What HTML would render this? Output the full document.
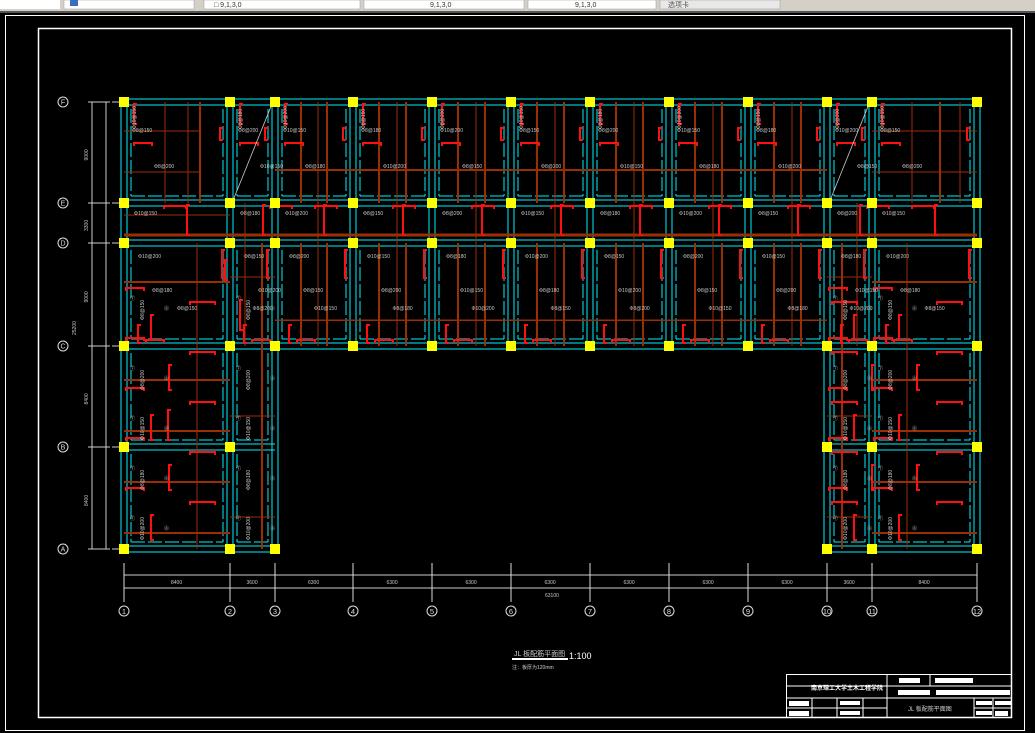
<!DOCTYPE html>
<html><head><meta charset="utf-8">
<style>
html,body{margin:0;padding:0;background:#000;width:1035px;height:733px;overflow:hidden}
svg{display:block}
text{font-family:"Liberation Sans","Noto Sans CJK SC",sans-serif}
</style></head>
<body>
<svg id="s" width="1035" height="733" viewBox="0 0 1035 733" xmlns="http://www.w3.org/2000/svg">
<rect x="0" y="0" width="1035" height="733" fill="#000"/>
<rect x="0" y="0" width="1035" height="11" fill="#d4d0c8"/>
<rect x="0" y="0" width="60" height="9" fill="#fff"/>
<rect x="64" y="0" width="130" height="9" fill="#fff" stroke="#999" stroke-width="0.5"/>
<rect x="70" y="0" width="8" height="6" fill="#3a6fc0"/>
<rect x="204" y="0" width="156" height="9" fill="#fff" stroke="#999" stroke-width="0.5"/>
<rect x="364" y="0" width="160" height="9" fill="#fff" stroke="#999" stroke-width="0.5"/>
<rect x="528" y="0" width="128" height="9" fill="#fff" stroke="#999" stroke-width="0.5"/>
<rect x="660" y="0" width="120" height="9" fill="#e8e8e8" stroke="#999" stroke-width="0.5"/>
<text x="214" y="7" font-size="7" fill="#333">□ 9,1,3,0</text>
<text x="430" y="7" font-size="7" fill="#333">9,1,3,0</text>
<text x="575" y="7" font-size="7" fill="#333">9,1,3,0</text>
<text x="668" y="7" font-size="7" fill="#555">选项卡</text>
<rect x="0" y="11" width="1035" height="2" fill="#555"/>
<rect x="5.5" y="15.5" width="1019" height="715" fill="none" stroke="#fff" stroke-width="1"/>
<rect x="38.5" y="28.5" width="973" height="689" fill="none" stroke="#fff" stroke-width="1.5"/>
<g id="g" shape-rendering="crispEdges"></g>
<g stroke="#fff" stroke-width="1" fill="none" shape-rendering="crispEdges">
<rect x="786.5" y="674.5" width="225" height="43"/>
<line x1="887" y1="674" x2="887" y2="718"/>
<line x1="930" y1="674" x2="930" y2="686"/>
<line x1="786" y1="686" x2="1012" y2="686"/>
<line x1="887" y1="698" x2="1012" y2="698"/>
<line x1="786" y1="698" x2="887" y2="698"/>
<line x1="786" y1="708" x2="887" y2="708"/>
<line x1="812" y1="698" x2="812" y2="718"/>
<line x1="837" y1="698" x2="837" y2="718"/>
<line x1="863" y1="698" x2="863" y2="718"/>
<line x1="974" y1="698" x2="974" y2="718"/>
<line x1="993" y1="698" x2="993" y2="718"/>
<line x1="974" y1="708" x2="1012" y2="708"/>
</g>
<g fill="#fff">
<rect x="899" y="678" width="21" height="5"/><rect x="935" y="678" width="38" height="5"/>
<rect x="898" y="690" width="32" height="5"/><rect x="936" y="690" width="74" height="5"/>
<rect x="789" y="701" width="20" height="5"/><rect x="840" y="701" width="20" height="4"/>
<rect x="789" y="711" width="20" height="5"/><rect x="840" y="711" width="20" height="4"/>
<rect x="976" y="701" width="16" height="4"/><rect x="995" y="701" width="16" height="4"/>
<rect x="976" y="711" width="16" height="4"/><rect x="995" y="711" width="13" height="5"/>
<rect x="512" y="658" width="56" height="2"/>
</g>
<text x="811" y="690" font-size="6" fill="#fff" font-weight="bold">南京理工大学土木工程学院</text>
<text x="908" y="711" font-size="6" fill="#ccc">JL 板配筋平面图</text>
<text x="514" y="656" font-size="7" fill="#ccc">JL 板配筋平面图</text>
<text x="569" y="659" font-size="9" fill="#fff">1:100</text>
<text x="512" y="669" font-size="5" fill="#ccc">注：板厚为120mm</text>
</svg>
<script>
(function(){
var g=document.getElementById('g');var h='';
var X=[124,230,275,353,432,511,590,669,748,827,872,977];
var Y=[102,203,243,346,447,549];var R=['F','E','D','C','B','A'];
function L(x1,y1,x2,y2,c,w,d){h+='<line x1="'+x1+'" y1="'+y1+'" x2="'+x2+'" y2="'+y2+'" stroke="'+c+'" stroke-width="'+(w||1)+'"'+(d?' stroke-dasharray="'+d+'"':'')+'/>';}
function T(x,y,s,r){h+='<text x="'+x+'" y="'+y+'" font-size="5" fill="#c8c8c8"'+(r?' transform="rotate(-90 '+x+' '+y+')"':'')+'>'+s+'</text>';}
var C='#00f0ff',B='#9a2e06',RD='#ff1010';
function wallH(y,x1,x2){L(x1,y-3,x2,y-3,C,1);L(x1,y+3,x2,y+3,C,1);}
function wallV(x,y1,y2){L(x-3,y1,x-3,y2,C,1);L(x+3,y1,x+3,y2,C,1);}
[0,1,2,3].forEach(function(i){wallH(Y[i],124,977);});
[4,5].forEach(function(i){wallH(Y[i],124,275);wallH(Y[i],827,977);});
[0,1,2,9,10,11].forEach(function(i){wallV(X[i],102,549);});
for(var i=3;i<9;i++)wallV(X[i],102,346);
function bayDash(x1,x2,y1,y2){L(x1+7,y2-7,x2-7,y2-7,C,1,'14,3');L(x1+7,y1+7,x1+7,y2-7,C,1,'14,3');L(x2-7,y1+7,x2-7,y2-7,C,1,'14,3');}
for(var i=0;i<11;i++){bayDash(X[i],X[i+1],Y[0],Y[1]);bayDash(X[i],X[i+1],Y[2],Y[3]);}
[0,1,9,10].forEach(function(i){for(var r=3;r<5;r++)bayDash(X[i],X[i+1],Y[r],Y[r+1]);});
for(var i=2;i<9;i++){var m1=Math.round(X[i]+(X[i+1]-X[i])/3),m2=Math.round(X[i]+2*(X[i+1]-X[i])/3);
 L(m1,102,m1,203,B,2);L(m2,102,m2,203,B,2);L(m1,243,m1,346,B,2);L(m2,243,m2,346,B,2);
 var mm=Math.round((X[i]+X[i+1])/2+4);L(mm,102,mm,346,B,1);}
L(275,170,827,170,B,2);L(124,235,977,235,B,3);L(275,320,827,320,B,1.5);
L(165,102,165,203,B,1);L(200,102,200,203,B,2);L(188,102,188,203,B,1);
L(124,172,200,172,B,1);L(124,215,230,215,B,1);L(124,131,200,131,B,1);
L(912,102,912,203,B,1);L(940,102,940,203,B,2);L(960,102,960,203,B,1);
L(872,172,977,172,B,1);L(872,131,977,131,B,1);
[282,380,431,482,533].forEach(function(y){L(124,y,230,y,B,2);L(872,y,977,y,B,2);});
L(197,243,197,549,B,1);L(907,243,907,549,B,1);
L(262,243,262,549,B,2);L(842,243,842,549,B,2);
[277,416,517].forEach(function(y){L(230,y,275,y,B,1.2);L(827,y,872,y,B,1.2);});
L(245,203,245,346,B,1);L(857,203,857,346,B,1);
function brV(x,y,l){x=Math.round(x);h+='<path d="M'+(x+3)+' '+y+'H'+x+'V'+(y+l)+'H'+(x+3)+'" fill="none" stroke="'+RD+'" stroke-width="2"/>';}
function brH(x,y,l){x=Math.round(x);h+='<path d="M'+x+' '+(y+3)+'V'+y+'H'+(x+l)+'V'+(y+3)+'" fill="none" stroke="'+RD+'" stroke-width="2"/>';}
for(var i=0;i<11;i++){var xm=X[i]+10;brV(xm,104,20);brV((X[i]+X[i+1])/2+10,205,30);brV(X[i+1]-8,250,28);brV(X[i]+14,325,18);brH(X[i]+10,143,18);brH(X[i]+40,206,22);brH(X[i]+22,340,18);brV(X[i+1]-10,128,12);}
[0,9,10].forEach(function(i){[300,350,400,450,500].forEach(function(y,k){brV(X[i]+(k%2?45:27),y+15,25);brH(X[i]+2,y-12,18);brH(X[i+1]-40,y+2,25);});});
brV(168,410,30);brV(240,300,30);brV(225,260,20);
var labs=['Φ8@150','Φ8@200','Φ10@150','Φ8@180','Φ10@200'];
for(var i=0;i<11;i++){T(X[i]+8,132,labs[i%5]);T(X[i]+30,168,labs[(i+1)%5]);T(X[i]+10,215,labs[(i+2)%5]);T(X[i]+28,292,labs[(i+3)%5]);T(X[i]+14,258,labs[(i+4)%5]);T((X[i]+X[i+1])/2,310,labs[i%5]);T(X[i]+12,129,labs[(i+2)%5],1);}
[0,1,9,10].forEach(function(i){[300,370,420,470,520].forEach(function(y,k){T(X[i]+6,y,'⑦');T(X[i]+40,y+10,'⑧');T(X[i]+20,y+20,labs[k],1);});});
L(92,102,92,549,'#ccc',1);L(106,102,106,549,'#ccc',1);
Y.forEach(function(y,k){L(88,y,110,y,'#ccc',1);L(112,y,120,y,'#ccc',1);
 h+='<circle cx="63" cy="'+y+'" r="5" fill="none" stroke="#ddd" stroke-width="1" shape-rendering="auto"/><text x="63" y="'+(y+2.5)+'" font-size="7" fill="#ddd" text-anchor="middle">'+R[k]+'</text>';});
var vd=['9000','3300','9000','8400','8400'];
for(var k=0;k<5;k++)T(88,(Y[k]+Y[k+1])/2+8,vd[k],1);
T(76,335,'25200',1);
L(124,575,977,575,'#ccc',1);L(124,588,977,588,'#ccc',1);
var hd=['8400','3600','6300','6300','6300','6300','6300','6300','6300','3600','8400'];
X.forEach(function(x,k){L(x,563,x,602,'#ddd',1);
 h+='<circle cx="'+x+'" cy="611" r="5" fill="none" stroke="#ddd" stroke-width="1" shape-rendering="auto"/><text x="'+x+'" y="614" font-size="7.5" fill="#ddd" text-anchor="middle">'+(k+1)+'</text>';
 if(k<11)T((x+X[k+1])/2-6,584,hd[k]);});
T(545,597,'63100');
h+='<g shape-rendering="auto">';L(234,198,272,104,'#ccc',0.8);L(831,198,869,104,'#ccc',0.8);h+='</g>';
var cols=[[0,1,2,3,4,5,6,7,8,9,10,11],[0,1,2,3,4,5,6,7,8,9,10,11],[0,1,2,3,4,5,6,7,8,9,10,11],[0,1,2,3,4,5,6,7,8,9,10,11],[0,1,9,10,11],[0,1,2,9,10,11]];
cols.forEach(function(a,r){a.forEach(function(i){h+='<rect x="'+(X[i]-5)+'" y="'+(Y[r]-5)+'" width="10" height="10" fill="#ffff00"/>';});});
g.innerHTML=h;
})();
</script>
</body></html>
